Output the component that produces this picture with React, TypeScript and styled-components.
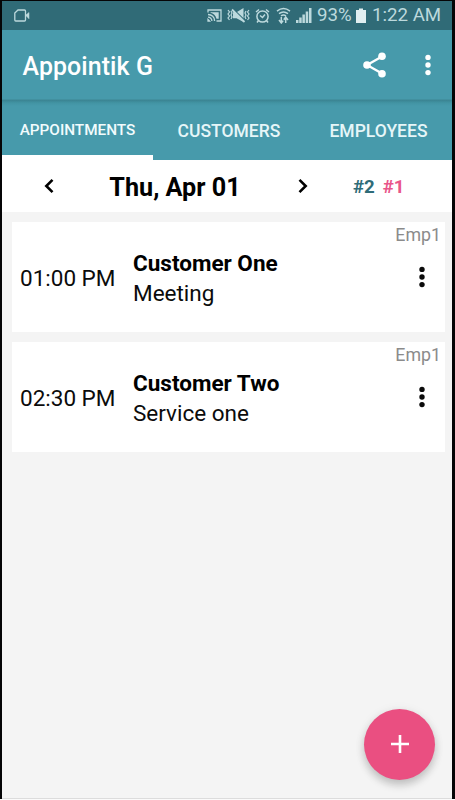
import React from "react";
import styled, { createGlobalStyle } from "styled-components";

const GlobalStyle = createGlobalStyle`
  * { box-sizing: border-box; }
  body { margin: 0; background: #000; font-family: Roboto, "Liberation Sans", sans-serif; }
  button { border: 0; padding: 0; margin: 0; background: none; font: inherit; color: inherit; }
  svg { display: block; }
`;

const Frame = styled.div`
  width: 455px;
  height: 800px;
  padding: 1px 3px 1px 2px;
  background: #050506;
  overflow: hidden;
  border-bottom: 1px solid #fafafa;
`;

const Screen = styled.main`
  height: 798px;
  display: flex;
  flex-direction: column;
  background: #f4f4f4;
  border-bottom: 1px solid #dcdcdc;
`;

const StatusBar = styled.div`
  height: 29px;
  flex: none;
  display: flex;
  align-items: center;
  justify-content: space-between;
  padding: 0 9px 0 12px;
  background: #306b77;
  color: #bcd9dd;
`;

const StatusGroup = styled.div`
  display: flex;
  align-items: center;
`;

const StatusIcon = styled.svg<{ $gap: number }>`
  margin-right: ${(p) => p.$gap}px;
`;

const StatusText = styled.span<{ $width: number; $gap?: number }>`
  width: ${(p) => p.$width}px;
  margin-left: ${(p) => p.$gap ?? 0}px;
  font-size: 18.7px;
  line-height: 29px;
  white-space: nowrap;
`;

const Toolbar = styled.header`
  height: 70px;
  flex: none;
  display: flex;
  align-items: center;
  padding: 0 4px 0 20.5px;
  background: #479aab;
  color: #fff;
  border-bottom: 1px solid #42909f;
`;

const Title = styled.h1`
  flex: 1;
  margin: 0;
  padding-top: 5px;
  font-size: 24.9px;
  font-weight: 500;
  line-height: 32px;
  letter-spacing: 0.1px;
`;

const IconButton = styled.button<{ $width: number }>`
  width: ${(p) => p.$width}px;
  height: 40px;
  display: flex;
  align-items: center;
  justify-content: center;
`;

const Tabs = styled.nav`
  height: 60px;
  flex: none;
  display: grid;
  grid-template-columns: 151px 151px 148px;
  background: linear-gradient(#3a8391, #4294a4 3px, #479aab 6px);
`;

const Tab = styled.button<{ $active?: boolean }>`
  height: 60px;
  padding: ${(p) => (p.$active ? "5px 0 0" : "1px 0 0 1px")};
  border-bottom: ${(p) => (p.$active ? "5px solid #fff" : "0")};
  color: ${(p) => (p.$active ? "#f2fcfd" : "#e6f6f8")};
  font-size: ${(p) => (p.$active ? 15.3 : 17.5)}px;
  font-weight: 500;
  white-space: nowrap;
`;

const DateBar = styled.section`
  height: 52px;
  flex: none;
  display: grid;
  grid-template-columns: 94px 158px 97px 1fr;
  align-items: center;
  justify-items: center;
  background: #fff;
  color: #000;
`;

const DateLabel = styled.h2`
  margin: 0;
  padding-top: 4px;
  font-size: 25.2px;
  line-height: 30px;
  font-weight: 700;
  white-space: nowrap;
`;

const Counts = styled.div`
  justify-self: start;
  padding: 1px 0 0 2px;
  display: flex;
  gap: 8px;
  font-size: 18.7px;
  font-weight: 700;
`;

const Count = styled.span<{ $color: string }>`
  color: ${(p) => p.$color};
`;

const List = styled.section`
  flex: 1;
  padding: 10px 7px 0 10px;
  display: flex;
  flex-direction: column;
  gap: 10px;
`;

const Card = styled.article`
  height: 110px;
  display: grid;
  grid-template-columns: 121px 1fr 60px;
  background: #fff;
  color: #0b0b0b;
`;

const Time = styled.time`
  align-self: center;
  padding: 1px 0 0 8px;
  font-size: 22.5px;
  line-height: 28px;
  white-space: nowrap;
`;

const Details = styled.div`
  padding-top: 26px;
  font-size: 22.5px;
  line-height: 30px;
  white-space: nowrap;
`;

const Customer = styled.div`
  font-weight: 700;
  color: #000;
`;

const Side = styled.div`
  display: flex;
  flex-direction: column;
  align-items: flex-end;
  padding: 3px 4px 0 0;
`;

const Employee = styled.span`
  color: #8b8b8b;
  font-size: 17.8px;
  line-height: 20px;
`;

const CardMenu = styled.button`
  margin: 20px 13px 0 0;
`;

const Fab = styled.button`
  align-self: flex-end;
  width: 71px;
  height: 71px;
  flex: none;
  margin: 0 17px 18px 0;
  padding-bottom: 2px;
  display: flex;
  align-items: center;
  justify-content: center;
  border-radius: 50%;
  background: #ea4f81;
  box-shadow: 0 5px 8px rgba(0, 0, 0, 0.2), 0 1px 12px rgba(0, 0, 0, 0.06);
`;

const Dots = () => (
  <svg width="12" height="24" viewBox="0 0 12 24" fill="currentColor">
    <circle cx="6" cy="4.4" r="2.7" />
    <circle cx="6" cy="12" r="2.7" />
    <circle cx="6" cy="19.6" r="2.7" />
  </svg>
);

const Chevron = ({ right = false }: { right?: boolean }) => (
  <svg width="12" height="16" viewBox="0 0 12 16" fill="none" stroke="currentColor" strokeWidth="2.6">
    <path d={right ? "M2.5 1.8L8.7 8L2.5 14.2" : "M9.5 1.8L3.3 8L9.5 14.2"} />
  </svg>
);

const StatusIcons = () => (
  <>
    <StatusIcon $gap={5} width="15" height="13" viewBox="0 0 15 13" fill="none" stroke="currentColor" strokeWidth="1.3">
      <path d="M1 3.5V1H14V12H9.5" />
      <path d="M1 5.5C4.8 5.5 7.6 8.2 7.6 12M1 8.2C3.2 8.2 4.9 9.8 4.9 12" />
      <path d="M3.5 3.3H11.7V9.7H9.5C8.8 6.5 6.5 4.2 3.5 3.7Z" fill="currentColor" stroke="none" />
      <path d="M1 10.5L2.5 12H1Z" fill="currentColor" />
    </StatusIcon>
    <StatusIcon $gap={5} width="23" height="17" viewBox="0 0 23 17" fill="none" stroke="currentColor" strokeWidth="1.2">
      <path d="M1 3L2.5 5L1 7L2.5 9L1 11L2.5 13M4 4L5 6L4 8L5 10L4 12M22 3L20.5 5L22 7L20.5 9L22 11L20.5 13M19 4L18 6L19 8L18 10L19 12" />
      <path d="M6 5.2H9.5L16.5 1V15L9.5 11.3H6Z" fill="currentColor" stroke="none" />
      <path d="M6 2L18.5 14" stroke="#306b77" strokeWidth="1.3" />
      <path d="M5 2.5L17.5 15" strokeWidth="1.8" />
    </StatusIcon>
    <StatusIcon $gap={6} width="15" height="16" viewBox="0 0 15 16" fill="none" stroke="currentColor" strokeWidth="1.5">
      <circle cx="7.5" cy="8.5" r="5.6" />
      <path d="M1 4L4 1.5M14 4L11 1.5M3.5 12.5L2 14.5M11.5 12.5L13 14.5M5 7.5L7.5 9.5L10 6.5" />
    </StatusIcon>
    <StatusIcon $gap={5} width="15" height="17" viewBox="0 0 15 17" fill="none" stroke="currentColor" strokeWidth="1.5">
      <path d="M1 4.2Q7.5 -1 14 4.2M3 6.7Q7.5 3.2 12 6.7M5 9Q7.5 7.2 10 9" />
      <path d="M5.3 10V16M3 13L5.3 16L7.2 13.6M9.7 16V10M7.8 12.7L9.7 10L12 13" />
    </StatusIcon>
    <StatusIcon $gap={5} width="16" height="15" viewBox="0 0 16 15" fill="currentColor">
      <path d="M0 12H2.5V15H0ZM3.2 9.5H5.7V15H3.2ZM6.4 6.5H8.9V15H6.4ZM9.7 3.5H12.2V15H9.7ZM13 0H15.5V15H13Z" />
    </StatusIcon>
  </>
);

const appointments = [
  { time: "01:00 PM", customer: "Customer One", service: "Meeting", employee: "Emp1" },
  { time: "02:30 PM", customer: "Customer Two", service: "Service one", employee: "Emp1" },
];

export default function App() {
  return (
    <Frame>
      <GlobalStyle />
      <Screen>
        <StatusBar>
          <svg width="16" height="13" viewBox="0 0 16 13" fill="none" stroke="currentColor" strokeWidth="1.3">
            <path d="M4 1H10.5Q11.5 1 11.5 2V11Q11.5 12 10.5 12H1.7Q.8 12 .8 11V4Z" />
            <path d="M11.5 6.3L15 3.5V9.8Z" fill="currentColor" strokeWidth=".5" />
          </svg>
          <StatusGroup>
            <StatusIcons />
            <StatusText $width={39}>93%</StatusText>
            <svg width="10" height="16" viewBox="0 0 10 16" fill="#e1eff1">
              <path d="M3 0.5H7V2H10V15H0V2H3Z" />
            </svg>
            <StatusText $width={71} $gap={6}>1:22 AM</StatusText>
          </StatusGroup>
        </StatusBar>
        <Toolbar>
          <Title>Appointik G</Title>
          <IconButton $width={64} aria-label="Share">
            <svg width="24" height="26" viewBox="0 0 24 26" fill="currentColor">
              <path d="M19.5 4.2L4 13L19.5 21.8" fill="none" stroke="currentColor" strokeWidth="2.3" />
              <circle cx="19" cy="4.2" r="3.8" />
              <circle cx="4" cy="13" r="3.8" />
              <circle cx="19" cy="21.8" r="3.8" />
            </svg>
          </IconButton>
          <IconButton $width={41} aria-label="More options"><Dots /></IconButton>
        </Toolbar>
        <Tabs>
          <Tab $active>APPOINTMENTS</Tab>
          <Tab>CUSTOMERS</Tab>
          <Tab>EMPLOYEES</Tab>
        </Tabs>
        <DateBar>
          <button aria-label="Previous day"><Chevron /></button>
          <DateLabel>Thu, Apr 01</DateLabel>
          <button aria-label="Next day"><Chevron right /></button>
          <Counts>
            <Count $color="#2f6c78">#2</Count>
            <Count $color="#e9558a">#1</Count>
          </Counts>
        </DateBar>
        <List>
          {appointments.map((a) => (
            <Card key={a.time}>
              <Time>{a.time}</Time>
              <Details>
                <Customer>{a.customer}</Customer>
                <div>{a.service}</div>
              </Details>
              <Side>
                <Employee>{a.employee}</Employee>
                <CardMenu aria-label="Appointment options"><Dots /></CardMenu>
              </Side>
            </Card>
          ))}
        </List>
        <Fab aria-label="Add appointment">
          <svg width="20" height="20" viewBox="0 0 20 20" stroke="#fff" strokeWidth="2.6">
            <path d="M10 1V19M1 10H19" />
          </svg>
        </Fab>
      </Screen>
    </Frame>
  );
}
